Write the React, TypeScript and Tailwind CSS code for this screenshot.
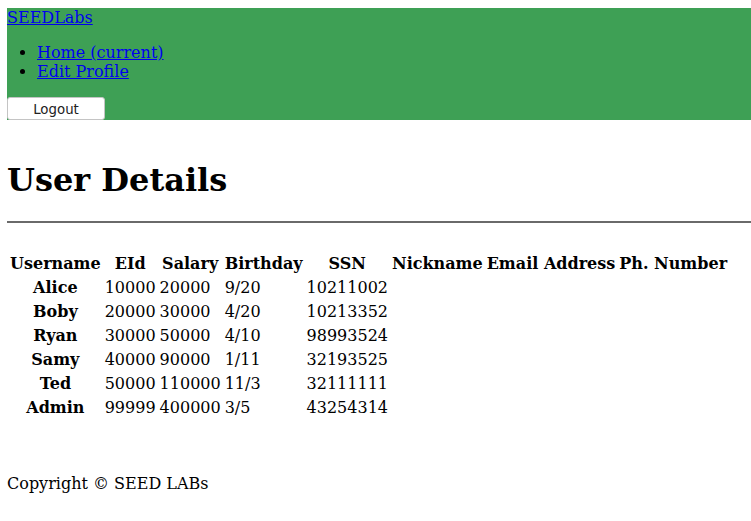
const users = [
  { name: "Alice", eid: "10000", salary: "20000", birth: "9/20", ssn: "10211002" },
  { name: "Boby", eid: "20000", salary: "30000", birth: "4/20", ssn: "10213352" },
  { name: "Ryan", eid: "30000", salary: "50000", birth: "4/10", ssn: "98993524" },
  { name: "Samy", eid: "40000", salary: "90000", birth: "1/11", ssn: "32193525" },
  { name: "Ted", eid: "50000", salary: "110000", birth: "11/3", ssn: "32111111" },
  { name: "Admin", eid: "99999", salary: "400000", birth: "3/5", ssn: "43254314" },
];

const headers = ["Username", "EId", "Salary", "Birthday", "SSN", "Nickname", "Email Address", "Ph. Number"];

export default function App() {
  return (
    <div className="min-h-[521px] bg-white pt-[8px] pl-[7px] font-['DejaVu_Serif',serif] text-[16px] text-black">
      <nav className="bg-[#3ea055]">
        <a href="#" className="block leading-[19px] text-[#0000ee] underline">
          SEEDLabs
        </a>
        <ul className="my-[16px] list-disc pl-[30px] leading-[19px]">
          <li>
            <a href="#" className="text-[#0000ee] underline">
              Home (current)
            </a>
          </li>
          <li>
            <a href="#" className="text-[#0000ee] underline">
              Edit Profile
            </a>
          </li>
        </ul>
        <button className="block h-[23px] w-[98px] rounded-[3px] border border-[#c4c4c4] bg-white pt-[2px] font-['DejaVu_Sans',sans-serif] text-[13.33px] text-[#222]">
          Logout
        </button>
      </nav>

      <h1 className="mt-[42px] mb-[22px] text-[32px] font-bold leading-[37px]">User Details</h1>
      <hr className="border-0 border-t-2 border-[#6a6a6a]" />

      <table className="mt-[28px] border-separate border-spacing-[2px]">
        <thead>
          <tr>
            {headers.map((h) => (
              <th key={h} className="h-[22px] p-[1px] text-center font-bold leading-[20px]">
                {h}
              </th>
            ))}
          </tr>
        </thead>
        <tbody>
          {users.map((u) => (
            <tr key={u.name}>
              <th className="h-[22px] p-[1px] text-center font-bold leading-[20px]">{u.name}</th>
              <td className="p-[1px] leading-[20px]">{u.eid}</td>
              <td className="p-[1px] leading-[20px]">{u.salary}</td>
              <td className="p-[1px] leading-[20px]">{u.birth}</td>
              <td className="p-[1px] leading-[20px]">{u.ssn}</td>
              <td className="p-[1px] leading-[20px]"></td>
              <td className="p-[1px] leading-[20px]"></td>
              <td className="p-[1px] leading-[20px]"></td>
            </tr>
          ))}
        </tbody>
      </table>

      <footer className="mt-[53px] leading-[19px]">Copyright © SEED LABs</footer>
    </div>
  );
}
